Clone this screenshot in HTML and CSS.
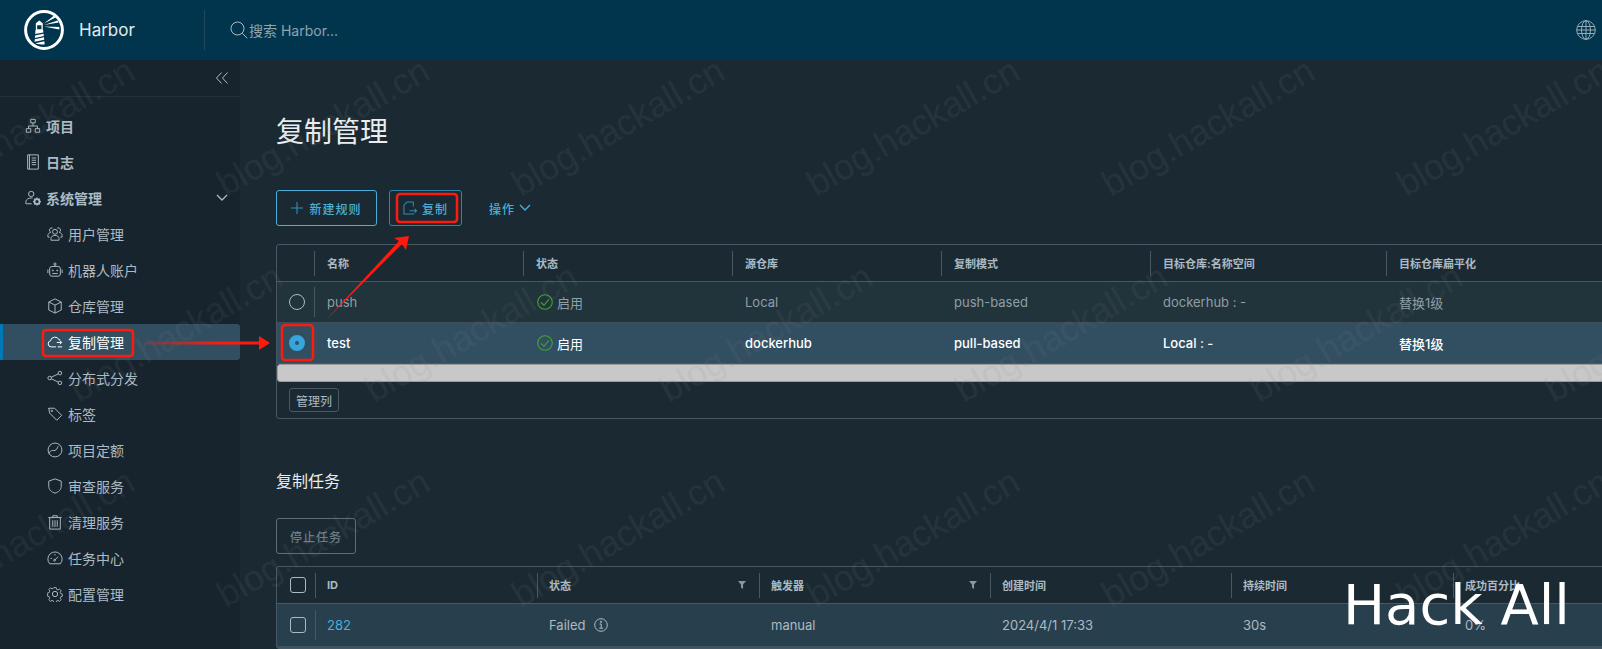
FILE: index.html
```html
<!DOCTYPE html>
<html>

<head>
  <title>Harbor</title>
  <link rel="stylesheet" href="styles.css">
</head>

<body>
  <header class="topbar">
    <div class="brand">
      <svg class="logo" viewBox="0 0 40 40">
        <circle cx="20" cy="20" r="18.4" fill="none" stroke="#fff" stroke-width="3" />
        <path fill="#fff" d="M15.3 10.5l3.4 2.7v1h-6.8v-1z" />
        <path fill="none" stroke="#fff" stroke-width="1.3" d="M12.5 14.5h5.6v5.5h-5.6z" />
        <path fill="#fff" d="M11.5 20h7.6l.3 2.4-8.2 1.6zM11 25.4l8.6-1.7.2 2.4-8.9 1.8zM10.8 29.2l9.2-1.9.2 2.5-9.6 2zM11.4 33.2l9-1.9.2 3.2c-3.2 0-6.400-.2-9.200-1.300z" />
        <path fill="#fff" d="M20 13.600L29.800 5.800l1.800 1.700zM20 15L33.700 10.400l1 2.200zM20 16.500l15.300.5v2.600z" />
      </svg>
      <span class="brand-name">Harbor</span>
    </div>
    <div class="search">
      <svg class="search-icon" viewBox="0 0 18 18">
        <circle cx="7.500" cy="7.500" r="6.500" />
        <path d="M12.300 12.300l5 5" />
      </svg>
      <span>搜索 Harbor...</span>
    </div>
    <svg class="globe" viewBox="0 0 20 20">
      <circle cx="10" cy="10" r="9.300" />
      <ellipse cx="10" cy="10" rx="4.500" ry="9.300" />
      <path d="M10 .7v18.600M1.500 6.500h17M.7 10h18.600M1.500 13.500h17" />
    </svg>
  </header>

  <div class="layout">
    <aside class="sidebar">
      <div class="collapse">
        <svg viewBox="0 0 12 12">
          <path d="M5.500 .5L.5 6l5 5.500M11.500 .5L6.500 6l5 5.500" />
        </svg>
      </div>
      <nav class="nav">
        <a class="nav-item nav-top">
          <svg class="ico" viewBox="0 0 18 18"><path d="M6.500 1.500h5v4h-5zM1.500 12h5v4h-5zM11.500 12h5v4h-5zM9 5.500V9M4 12V9h10v3" /></svg>
          项目
        </a>
        <a class="nav-item nav-top">
          <svg class="ico" viewBox="0 0 18 18"><path d="M3 1h12v16H3zM5 1v16M7.500 4.500h5M7.500 7h5M7.500 9.500h5M7.500 12h5" /></svg>
          日志
        </a>
        <a class="nav-item nav-top">
          <svg class="ico" viewBox="0 0 18 18"><circle cx="7" cy="4.500" r="3" /><path d="M1 15.500v-2.500c0-2.500 3-4 6-4 .6 0 1 0 1.500.1M1 15.500h6.500" /><circle cx="13.500" cy="13" r="2.800" stroke-width="2" /><path stroke-width="1.500" d="M13.500 8.500v1.500M13.500 16v1.500M9 13h1.500M16.500 13H18M10.300 9.800l1 1M15.700 15.200l1 1M10.300 16.200l1-1M15.700 10.800l1-1" /></svg>
          系统管理
          <svg class="chevron" viewBox="0 0 12 8"><path d="M1 1l5 5 5-5" /></svg>
        </a>
        <a class="nav-item nav-sub">
          <svg class="ico" viewBox="0 0 18 18"><circle cx="9" cy="6.500" r="2.800" /><path d="M4.500 16v-2c0-2 2-3.500 4.500-3.500s4.500 1.500 4.500 3.500v2zM6.300 2.300a2.500 2.500 0 0 0-2 4.700c-2 .6-3.300 2-3.300 3.800v1.700h2M11.700 2.300a2.500 2.500 0 0 1 2 4.700c2 .6 3.300 2 3.300 3.800v1.700h-2" /></svg>
          用户管理
        </a>
        <a class="nav-item nav-sub">
          <svg class="ico" viewBox="0 0 18 18"><rect x="3" y="5" width="12" height="11" rx="2.500" /><circle cx="9" cy="2.300" r="1.200" /><path d="M9 3.500V5M6 13h6M1 8.500v4M17 8.500v4" /><circle cx="6.500" cy="9.500" r=".6" /><circle cx="11.500" cy="9.500" r=".6" /></svg>
          机器人账户
        </a>
        <a class="nav-item nav-sub">
          <svg class="ico" viewBox="0 0 18 18"><path d="M9 1l7 3.500v9L9 17l-7-3.500v-9zM2 4.500L9 8l7-3.500M9 8v9" /></svg>
          仓库管理
        </a>
        <a class="nav-item nav-sub nav-active">
          <svg class="ico" viewBox="0 0 18 18"><path d="M10 14.500H4.500A3.500 3.500 0 0 1 4 7.600 5 5 0 0 1 13.500 6.500c.5 0 1 .1 1.500.3M17 14.500h-5M11 9.500h5.500M14.500 7.500l2 2-2 2" /></svg>
          复制管理
        </a>
        <a class="nav-item nav-sub">
          <svg class="ico" viewBox="0 0 18 18"><circle cx="14.500" cy="3.500" r="2" /><circle cx="3" cy="9" r="2" /><circle cx="14.500" cy="14.500" r="2" /><path d="M4.800 8.100l7.900-3.700M4.800 9.900l7.900 3.700" /></svg>
          分布式分发
        </a>
        <a class="nav-item nav-sub">
          <svg class="ico" viewBox="0 0 18 18"><path d="M2 2.500h6.500l8 8-5.500 5.500-8-8zM2 2.500v1" /><circle cx="5.500" cy="5.500" r=".8" /></svg>
          标签
        </a>
        <a class="nav-item nav-sub">
          <svg class="ico" viewBox="0 0 18 18"><circle cx="9" cy="9" r="7.800" /><path d="M2 13c1.300-2.300 2.500-3.500 4-3.500 1.500 0 2 .4 3 0 1.500-.6 2.500-2 3.500-4.800" /></svg>
          项目定额
        </a>
        <a class="nav-item nav-sub">
          <svg class="ico" viewBox="0 0 18 18"><path d="M9 1l7 2.500v6c0 3.500-3 6.500-7 7.500-4-1-7-4-7-7.500v-6z" /></svg>
          审查服务
        </a>
        <a class="nav-item nav-sub">
          <svg class="ico" viewBox="0 0 18 18"><path d="M1.500 4h15M6.500 4V2h5v2M3 4v13h12V4M6.500 7v7.500M9 7v7.500M11.500 7v7.500" /></svg>
          清理服务
        </a>
        <a class="nav-item nav-sub">
          <svg class="ico" viewBox="0 0 18 18"><path d="M3 15.500h12a8 8 0 1 0-12 0zM8.500 11.500l4-4M4 9.500h1.500M9 4.500V6" /><circle cx="8.500" cy="11.500" r="1" /></svg>
          任务中心
        </a>
        <a class="nav-item nav-sub">
          <svg class="ico" viewBox="0 0 18 18"><circle cx="9" cy="9" r="3" /><path d="M7.500 1h3l.5 2.300 1.700.7 2-1.200 2 2.100-1.200 2 .7 1.700 2 .5v2.800l-2 .5-.7 1.700 1.200 2-2 2.100-2-1.200-1.700.7-.5 2.300h-3l-.5-2.300-1.700-.7-2 1.200-2-2.100 1.200-2-.7-1.700-2-.5V7.600l2-.5.7-1.700-1.200-2 2-2.100 2 1.200 1.700-.7z" transform="translate(.9 .9) scale(.9)" /></svg>
          配置管理
        </a>
      </nav>
    </aside>

    <main class="content">
      <h1 class="page-title">复制管理</h1>

      <div class="toolbar">
        <button class="btn btn-new">
          <svg class="btn-icon btn-plus" viewBox="0 0 12 12"><path d="M6 0v12M0 6h12" /></svg>
          新建规则
        </button>
        <button class="btn btn-copy">
          <svg class="btn-icon" viewBox="0 0 15 15"><path d="M9 10.500h-.5M12 14H1V4.500L4.500 1H11v5M7 10.500h7.500M12.500 8.500l2 2-2 2" /></svg>
          复制
        </button>
        <button class="btn btn-flat">
          操作
          <svg class="btn-chevron" viewBox="0 0 12 8"><path d="M1 1l5 5 5-5" /></svg>
        </button>
      </div>

      <section class="table">
        <div class="row row-head rules-cols">
          <div class="cell cell-first"></div>
          <div class="cell">名称</div>
          <div class="cell">状态</div>
          <div class="cell">源仓库</div>
          <div class="cell">复制模式</div>
          <div class="cell">目标仓库:名称空间</div>
          <div class="cell">目标仓库扁平化</div>
        </div>
        <div class="row row-rule rules-cols">
          <div class="cell cell-first"><span class="radio"></span></div>
          <div class="cell cell-sep">push</div>
          <div class="cell status">
            <svg class="ok" viewBox="0 0 16 16"><circle cx="8" cy="8" r="7.300" /><path d="M4 8.300l3 3 5-6" /></svg>
            启用
          </div>
          <div class="cell">Local</div>
          <div class="cell">push-based</div>
          <div class="cell">dockerhub : -</div>
          <div class="cell">替换1级</div>
        </div>
        <div class="row row-selected rules-cols">
          <div class="cell cell-first"><span class="radio radio-on"></span></div>
          <div class="cell">test</div>
          <div class="cell status">
            <svg class="ok" viewBox="0 0 16 16"><circle cx="8" cy="8" r="7.300" /><path d="M4 8.300l3 3 5-6" /></svg>
            启用
          </div>
          <div class="cell">dockerhub</div>
          <div class="cell">pull-based</div>
          <div class="cell">Local : -</div>
          <div class="cell">替换1级</div>
        </div>
        <div class="scrollbar"></div>
        <div class="table-foot">
          <button class="btn-columns">管理列</button>
        </div>
      </section>

      <h2 class="section-title">复制任务</h2>
      <button class="btn btn-stop">停止任务</button>

      <section class="table table-tasks">
        <div class="row row-head tasks-cols">
          <div class="cell cell-first"><span class="check"></span></div>
          <div class="cell">ID</div>
          <div class="cell cell-filter">状态
            <svg class="filter" viewBox="0 0 10 10"><path d="M0 0h10L6.300 4.500V10L3.700 8V4.500z" /></svg>
          </div>
          <div class="cell cell-filter">触发器
            <svg class="filter" viewBox="0 0 10 10"><path d="M0 0h10L6.300 4.500V10L3.700 8V4.500z" /></svg>
          </div>
          <div class="cell">创建时间</div>
          <div class="cell">持续时间</div>
          <div class="cell">成功百分比</div>
        </div>
        <div class="row row-task tasks-cols">
          <div class="cell cell-first"><span class="check"></span></div>
          <div class="cell cell-sep"><a class="link">282</a></div>
          <div class="cell status">Failed
            <svg class="info" viewBox="0 0 14 14"><circle cx="7" cy="7" r="6.300" /><path d="M5.500 6h1.700v4M5.200 10.200h3.800" /><circle cx="7" cy="3.800" r=".7" /></svg>
          </div>
          <div class="cell">manual</div>
          <div class="cell">2024/4/1 17:33</div>
          <div class="cell">30s</div>
          <div class="cell">0%</div>
        </div>
      </section>
    </main>
  </div>

  <svg class="watermark" width="1602" height="649">
    <defs>
      <pattern id="mark" patternUnits="userSpaceOnUse" width="295" height="411">
        <text transform="translate(226 197) rotate(-30)">blog.hackall.cn</text>
        <text transform="translate(-69 197) rotate(-30)">blog.hackall.cn</text>
        <text transform="translate(79 403) rotate(-30)">blog.hackall.cn</text>
        <text transform="translate(79 -8) rotate(-30)">blog.hackall.cn</text>
      </pattern>
    </defs>
    <rect x="0" y="60" width="1602" height="589" fill="url(#mark)" />
  </svg>

  <svg class="notes" width="1602" height="649">
    <rect x="43" y="330" width="90" height="26" rx="3" />
    <rect x="282" y="325" width="31" height="35" rx="3" />
    <rect x="397" y="194" width="60" height="28" rx="3" />
    <defs>
      <linearGradient id="fade" x1="0" x2="1" y1="0" y2="0">
        <stop offset="0" stop-color="#ff1a0e" stop-opacity=".2" />
        <stop offset=".6" stop-color="#ff1a0e" />
      </linearGradient>
    </defs>
    <path class="arrow" d="M145 341.500L259 341.500V336L270 343 259 350V344.500L145 344.500z" />
    <path class="arrow-solid" d="M325 321L399 241 394 238 409 236 406 250 402 244z" />
  </svg>

  <div class="stamp">Hack All</div>
</body>

</html>
```

FILE: styles.css
```css
* {
  box-sizing: border-box;
}

html,
body {
  height: 649px;
  margin: 0;
  overflow: hidden;
}

body {
  position: relative;
  background-color: #1b2a32;
  color: #acbac3;
  font-family: Inter, "Noto Sans CJK SC", sans-serif;
  font-size: 13px;
}

/* top bar */

.topbar {
  display: flex;
  align-items: center;
  height: 60px;
  background-color: #00354d;
}

.brand {
  display: flex;
  align-items: center;
  width: 205px;
  height: 40px;
  padding-left: 24px;
  border-right: 1px solid #1d4a60;
}

.logo {
  width: 40px;
  height: 40px;
}

.brand-name {
  margin-left: 15px;
  color: #e3eaed;
  font-size: 17px;
}

.search {
  display: flex;
  flex: 1;
  align-items: center;
  padding-left: 25px;
  color: #90a4ae;
  font-size: 14px;
}

.search-icon {
  width: 18px;
  height: 18px;
  margin-right: 1px;
  fill: none;
  stroke: #acbac3;
  stroke-width: 1;
}

.globe {
  width: 20px;
  height: 20px;
  margin-right: 6px;
  fill: none;
  stroke: #a3b5bf;
  stroke-width: .9;
}

/* sidebar */

.layout {
  display: flex;
  height: 589px;
}

.sidebar {
  flex: none;
  width: 240px;
  background-color: #17242e;
}

.collapse {
  display: flex;
  align-items: center;
  justify-content: flex-end;
  height: 37px;
  padding-right: 12px;
  border-bottom: 1px solid #22323c;
}

.collapse svg {
  width: 12px;
  height: 12px;
  fill: none;
  stroke: #acbac3;
}

.nav {
  display: flex;
  flex-direction: column;
  padding-top: 11px;
}

.nav-item {
  display: flex;
  align-items: center;
  height: 36px;
  font-size: 14px;
}

.nav-top {
  padding-left: 25px;
  font-weight: 700;
}

.nav-sub {
  padding-left: 47px;
}

.nav-active {
  border-left: 3px solid #0079b8;
  border-radius: 0 3px 3px 0;
  padding-left: 44px;
  background-color: #324f62;
  color: #fff;
}

.ico {
  flex: none;
  width: 16px;
  height: 16px;
  margin-right: 5px;
  fill: none;
  stroke: currentColor;
  stroke-width: 1.100;
}

.chevron {
  width: 12px;
  height: 8px;
  margin-left: auto;
  margin-right: 12px;
  fill: none;
  stroke: #acbac3;
  stroke-width: 1.300;
}

/* main */

.content {
  flex: 1;
  min-width: 0;
  padding-left: 36px;
  overflow: hidden;
}

.page-title {
  margin: 52px 0 0;
  color: #eaedf0;
  font-size: 28px;
  font-weight: 400;
  line-height: 40px;
}

.toolbar {
  display: flex;
  margin-top: 38px;
}

.btn {
  display: flex;
  align-items: center;
  justify-content: center;
  height: 36px;
  border: 1px solid #49afd9;
  border-radius: 3px;
  background: transparent;
  color: #49afd9;
  font-family: inherit;
  font-size: 12px;
  font-weight: 500;
  letter-spacing: 1px;
}

.btn-new {
  width: 101px;
}

.btn-copy {
  width: 73px;
  margin-left: 12px;
  border-color: #2a86ad;
}

.btn-flat {
  margin-left: 27px;
  padding: 0;
  border: none;
}

.btn-icon {
  width: 14px;
  height: 14px;
  margin-right: 5px;
  fill: none;
  stroke: #2d8fb8;
  stroke-width: 1.100;
}

.btn-plus {
  width: 12px;
  height: 12px;
  margin-right: 6px;
}

.btn-chevron {
  width: 12px;
  height: 8px;
  margin-left: 4px;
  fill: none;
  stroke: #49afd9;
  stroke-width: 1.300;
}

.btn-stop {
  width: 80px;
  margin-top: 25px;
  border-color: #5f6d76;
  color: #6f7c84;
}

.table {
  width: 1400px;
  margin-top: 18px;
  border: 1px solid #485764;
  border-radius: 3px;
}

.table-tasks {
  margin-top: 12px;
}

.row {
  display: grid;
  align-items: center;
}

.rules-cols {
  grid-template-columns: 37px 209px 209px 209px 209px 236px 1fr;
}

.tasks-cols {
  grid-template-columns: 38px 222px 222px 231px 241px 222px 1fr;
}

.row-head {
  height: 37px;
  border-bottom: 1px solid #485764;
  color: #acbac3;
  font-size: 11px;
  font-weight: 700;
}

.row-head .cell {
  display: flex;
  align-items: center;
  height: 25px;
  padding-left: 12px;
  border-left: 1px solid #485764;
}

.row-head .cell-first {
  padding-left: 3px;
  border-left: none;
}

.table-tasks .row-head .cell {
  padding-left: 11px;
}

.table-tasks .row-head .cell-first {
  padding-left: 3px;
}

.row-rule {
  height: 41px;
  border-bottom: 1px solid #3d4e59;
  background-color: #21333b;
  color: #8f9fa8;
}

.row-selected {
  height: 41px;
  border-bottom: 1px solid #485764;
  background-color: #324f62;
  color: #fff;
  font-weight: 500;
}

.row-selected .status {
  font-weight: 400;
}

.row-task {
  height: 44px;
  border-bottom: 2px solid #3d5362;
  background-color: #28404d;
}

.cell {
  padding-left: 13px;
  white-space: nowrap;
}

.cell-first {
  display: flex;
  align-items: center;
  justify-content: center;
  padding-left: 3px;
}

.cell-sep {
  display: flex;
  align-items: center;
  height: 30px;
  padding-left: 12px;
  border-left: 1px solid #485764;
}

.cell-filter {
  justify-content: space-between;
  padding-right: 13px;
}

.status {
  display: flex;
  align-items: center;
  padding-left: 14px;
}

.row-task .cell {
  padding-left: 12px;
}

.row-task .cell-sep {
  padding-left: 11px;
}

.row-task .cell-first {
  padding-left: 3px;
}

.ok {
  width: 16px;
  height: 16px;
  margin-right: 4px;
  fill: none;
  stroke: #3fa535;
  stroke-width: 1.100;
}

.info {
  width: 14px;
  height: 14px;
  margin-left: 8px;
  fill: none;
  stroke: #acbac3;
  stroke-width: 1;
}

.filter {
  width: 8px;
  height: 8px;
  fill: #8a979f;
}

.radio {
  width: 16px;
  height: 16px;
  border: 1px solid #acbac3;
  border-radius: 50%;
}

.radio-on {
  border: 6px solid #35a5dc;
  background-color: #324f62;
}

.check {
  width: 16px;
  height: 16px;
  border: 1px solid #acbac3;
  border-radius: 3px;
}

.link {
  color: #49afd9;
}

.scrollbar {
  height: 18px;
  border: 1px solid #9b9b9b;
  border-radius: 3px 0 0 3px;
  background-color: #c8c8c8;
}

.table-foot {
  display: flex;
  align-items: center;
  height: 36px;
  padding-left: 12px;
}

.btn-columns {
  width: 50px;
  height: 24px;
  padding: 0;
  border: 1px solid #485764;
  border-radius: 3px;
  background: transparent;
  color: #acbac3;
  font-family: inherit;
  font-size: 12px;
}

.section-title {
  margin: 50px 0 0;
  color: #eaedf0;
  font-size: 16px;
  font-weight: 400;
  line-height: 24px;
}

/* overlays */

.watermark,
.notes {
  position: absolute;
  top: 0;
  left: 0;
  pointer-events: none;
}

.watermark text {
  fill: rgba(128, 128, 128, .1);
  font-family: "Liberation Sans", sans-serif;
  font-size: 36px;
}

.notes rect {
  fill: none;
  stroke: #ff1a0e;
  stroke-width: 2.500;
}

.arrow {
  fill: url(#fade);
  stroke: none;
}

.arrow-solid {
  fill: #ff1a0e;
}

.stamp {
  position: absolute;
  top: 565px;
  left: 1343px;
  color: #fff;
  font-family: "DejaVu Sans", sans-serif;
  font-size: 56px;
  line-height: 80px;
  white-space: nowrap;
}
```
